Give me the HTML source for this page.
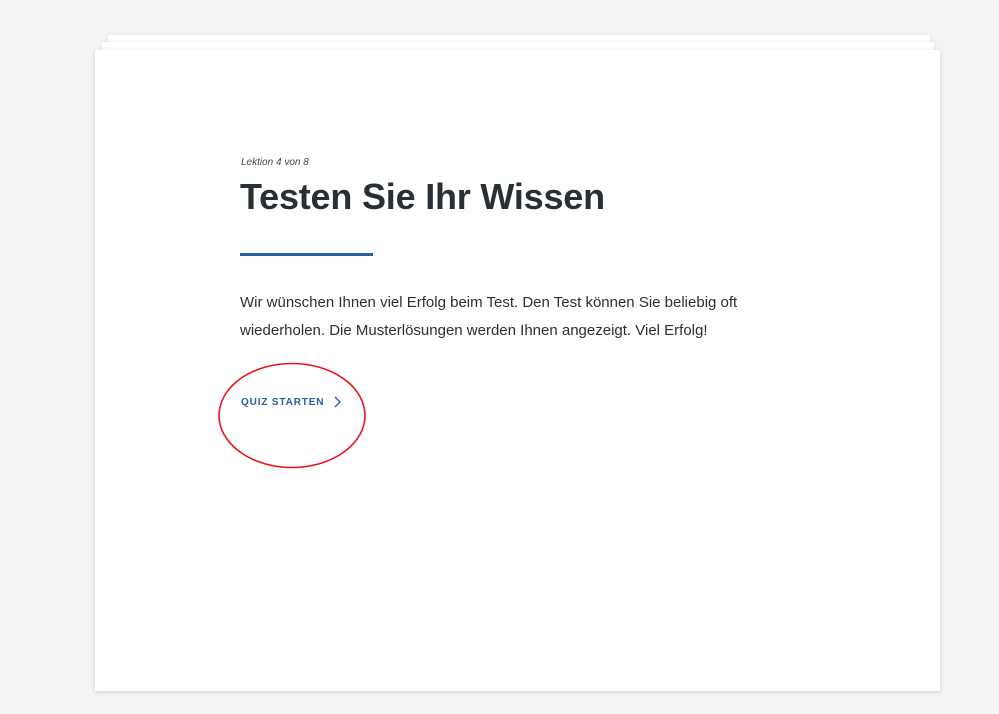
<!DOCTYPE html>
<html><head><meta charset="utf-8"><style>
html,body{margin:0;padding:0;width:999px;height:714px;background:#f4f4f4;overflow:hidden;font-family:"Liberation Sans",sans-serif;}
.c{position:absolute;background:#fff;}
.c1{left:108px;top:35px;width:822px;height:640px;box-shadow:0 0 4px rgba(0,0,0,.08);}
.c2{left:102px;top:42px;width:832px;height:640px;box-shadow:0 0 4px rgba(0,0,0,.08);}
.c3{left:95px;top:50px;width:845px;height:641px;box-shadow:0 1px 5px rgba(0,0,0,.15);}
.t{position:absolute;color:#2a3338;}
</style></head><body>
<div class="c c1"></div><div class="c c2"></div><div class="c c3"></div>
<div class="t" style="left:241px;top:157px;font-size:10px;font-style:italic;color:#444;">Lektion 4 von 8</div>
<div class="t" style="left:240px;top:176px;font-size:36px;font-weight:bold;letter-spacing:-0.2px;color:#283035;">Testen Sie Ihr Wissen</div>
<div style="position:absolute;left:240px;top:253px;width:133px;height:3px;background:#2b5c9e;"></div>
<div class="t" style="left:240px;top:289px;width:540px;font-size:15px;line-height:28px;color:#2a2f33;">Wir wünschen Ihnen viel Erfolg beim Test. Den Test können Sie beliebig oft wiederholen. Die Musterlösungen werden Ihnen angezeigt. Viel Erfolg!</div>
<div class="t" style="left:241px;top:397px;font-size:10px;font-weight:bold;letter-spacing:0.85px;color:#2b5c9e;">QUIZ STARTEN</div>
<svg style="position:absolute;left:0;top:0" width="999" height="714">
<path d="M335 397 L340 402 L335 407" fill="none" stroke="#2b5c9e" stroke-width="1.4"/>
<ellipse cx="292" cy="415.5" rx="73" ry="52" fill="none" stroke="#e8141c" stroke-width="1.6"/>
</svg>
</body></html>
